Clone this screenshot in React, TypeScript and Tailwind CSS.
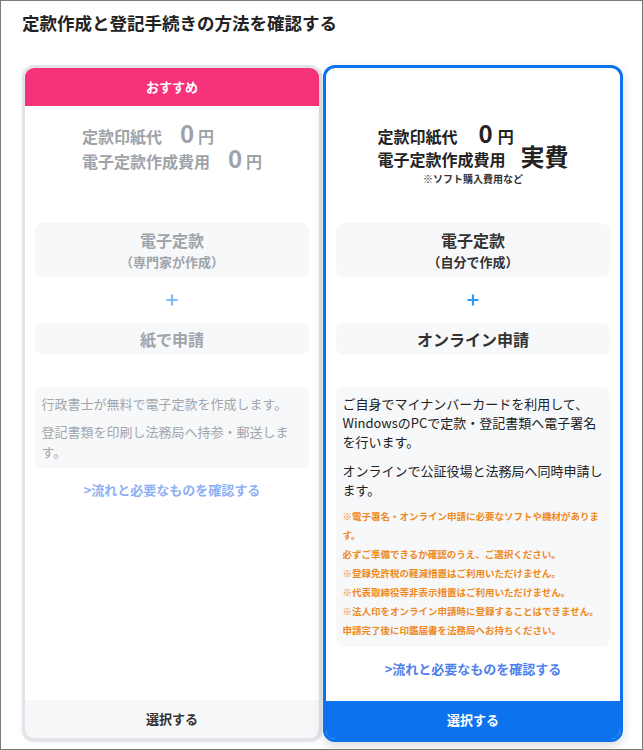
import React from "react";

function Plus({ color }: { color: string }) {
  return (
    <div className="h-[46px] flex items-center justify-center">
      <svg width="12" height="12" viewBox="0 0 12 12">
        <path d="M6 0.5V11.5M0.5 6H11.5" stroke={color} strokeWidth="2.2" fill="none" />
      </svg>
    </div>
  );
}

export default function App() {
  return (
    <div className="w-[643px] h-[750px] border border-[#7b7b7b] bg-white font-['Noto_Sans_CJK_JP','Noto_Sans',sans-serif] overflow-hidden">
      <div className="pl-[21px] pt-[10px] leading-[24px] text-[17.5px] font-bold text-[#222]">
        定款作成と登記手続きの方法を確認する
      </div>
      <div className="mt-[30px] pl-[21px] flex items-start gap-[1px]">
        {/* Left card */}
        <div className="w-[300px] h-[676px] border-[3px] border-[#e1e4e8] rounded-[12px] overflow-hidden flex flex-col bg-white shadow-sm">
          <div className="h-[38px] shrink-0 bg-[#f5327a] text-white font-bold text-[13px] flex items-center justify-center">
            おすすめ
          </div>
          <div className="h-[117px] shrink-0 pt-[14px] flex justify-center">
            <div className="text-[16px] font-bold text-[#9ea3a9]">
              <div className="h-[25px] flex items-baseline whitespace-nowrap">
                <span className="leading-[25px]">定款印紙代</span>
                <span className="ml-[18px] text-[24px] leading-[25px]">0</span>
                <span className="ml-[4px] leading-[25px]">円</span>
              </div>
              <div className="h-[25px] flex items-baseline whitespace-nowrap">
                <span className="leading-[25px]">電子定款作成費用</span>
                <span className="ml-[18px] text-[24px] leading-[25px]">0</span>
                <span className="ml-[4px] leading-[25px]">円</span>
              </div>
            </div>
          </div>
          <div className="mx-[10px] rounded-lg bg-[#f7f8fa] py-[6px] text-center font-bold text-[#a0a4aa]">
            <div className="text-[16px] leading-[23px]">電子定款</div>
            <div className="text-[13px] leading-[19px]">（専門家が作成）</div>
          </div>
          <Plus color="#7fbcf5" />
          <div className="mx-[10px] rounded-lg bg-[#f7f8fa] py-[6px] text-center font-bold text-[16px] leading-[20px] text-[#a0a4aa]">
            紙で申請
          </div>
          <div className="mt-8 mx-[10px] rounded-lg bg-[#f7f8fa] px-[6.5px] py-[7px] text-[13px] leading-[19.5px] text-[#a3a6ab]">
            <p>行政書士が無料で電子定款を作成します。</p>
            <p className="mt-[8.5px]">登記書類を印刷し法務局へ持参・郵送します。</p>
          </div>
          <div className="mt-[12px] text-center text-[13px] leading-[20px] font-bold text-[#8db0f5]">
            &gt;流れと必要なものを確認する
          </div>
          <div className="flex-1" />
          <div className="h-[38px] shrink-0 bg-[#f7f8fa] flex items-center justify-center text-[13px] font-bold text-[#333]">
            選択する
          </div>
        </div>

        {/* Right card */}
        <div className="w-[300px] h-[677px] border-[3px] border-[#0d72ee] rounded-[12px] overflow-hidden flex flex-col bg-white shadow-[0_4px_12px_rgba(0,0,0,0.15)]">
          <div className="h-[155px] shrink-0 pt-[53px] flex flex-col items-center">
            <div className="text-[16px] font-bold text-[#222]">
              <div className="h-[23px] flex items-baseline whitespace-nowrap">
                <span className="leading-[23px]">定款印紙代</span>
                <span className="ml-[21px] text-[24px] leading-[23px]">0</span>
                <span className="ml-[5px] leading-[23px]">円</span>
              </div>
              <div className="h-[23px] flex items-baseline whitespace-nowrap">
                <span className="leading-[23px]">電子定款作成費用</span>
                <span className="ml-[15px] text-[24px] leading-[23px]">実費</span>
              </div>
            </div>
            <div className="mt-[5px] text-[10px] leading-[14px] font-bold text-[#333] text-center">
              ※ソフト購入費用など
            </div>
          </div>
          <div className="mx-[10px] rounded-lg bg-[#f7f8fa] py-[6px] text-center font-bold text-[#333]">
            <div className="text-[16px] leading-[23px]">電子定款</div>
            <div className="text-[13px] leading-[19px]">（自分で作成）</div>
          </div>
          <Plus color="#2f9bf3" />
          <div className="mx-[10px] rounded-lg bg-[#f7f8fa] py-[6px] text-center font-bold text-[16px] leading-[20px] text-[#333]">
            オンライン申請
          </div>
          <div className="mt-8 mx-[10px] rounded-lg bg-[#f7f8fa] px-[6.5px] py-[7px] text-[13px] leading-[19px] text-[#222]">
            <p>ご自身でマイナンバーカードを利用して、WindowsのPCで定款・登記書類へ電子署名を行います。</p>
            <p className="mt-[10px]">オンラインで公証役場と法務局へ同時申請します。</p>
            <div className="mt-[8px] text-[9.5px] leading-[19px] font-bold text-[#ef8a22]">
              <div>※電子署名・オンライン申請に必要なソフトや機材があります。</div>
              <div>必ずご準備できるか確認のうえ、ご選択ください。</div>
              <div>※登録免許税の軽減措置はご利用いただけません。</div>
              <div>※代表取締役等非表示措置はご利用いただけません。</div>
              <div>※法人印をオンライン申請時に登録することはできません。</div>
              <div>申請完了後に印鑑届書を法務局へお持ちください。</div>
            </div>
          </div>
          <div className="mt-[12px] text-center text-[13px] leading-[20px] font-bold text-[#4f80ef]">
            &gt;流れと必要なものを確認する
          </div>
          <div className="flex-1" />
          <div className="h-[38px] shrink-0 bg-[#0d72ee] flex items-center justify-center text-[13px] font-bold text-white">
            選択する
          </div>
        </div>
      </div>
    </div>
  );
}
